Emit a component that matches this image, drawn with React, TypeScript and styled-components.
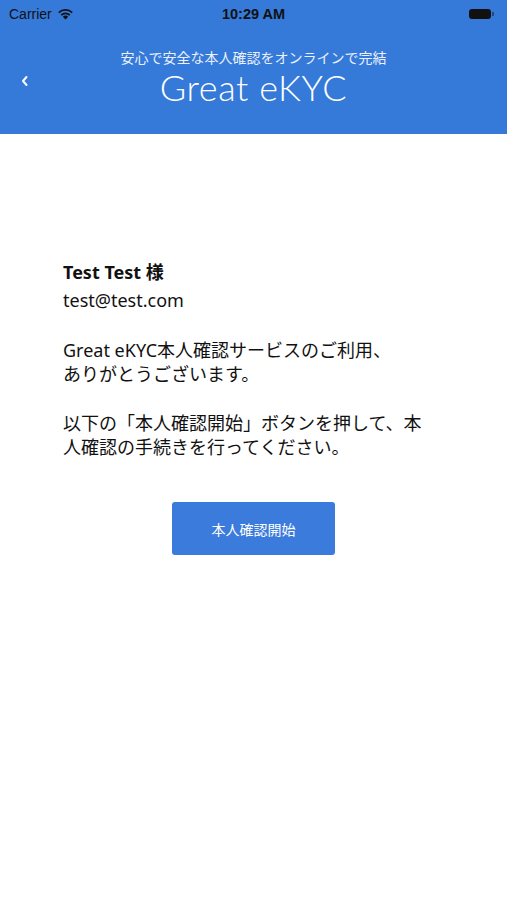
import styled, { createGlobalStyle } from "styled-components";

const GlobalStyle = createGlobalStyle`
  html, body {
    margin: 0;
    padding: 0;
    background: #ffffff;
  }
  body {
    font-family: "Noto Sans", "Noto Sans CJK JP", sans-serif;
  }
`;

const Screen = styled.div`
  width: 507px;
  height: 900px;
  background: #ffffff;
  display: flex;
  flex-direction: column;
`;

const Header = styled.header`
  background: #3579d9;
  height: 134px;
  color: #ffffff;
  display: flex;
  flex-direction: column;
`;

const StatusBar = styled.div`
  height: 28px;
  display: grid;
  grid-template-columns: 1fr auto 1fr;
  align-items: center;
  padding: 0 9px;
  font-family: "Liberation Sans", "Noto Sans", sans-serif;
  font-size: 14px;
  color: #111;
`;

const Carrier = styled.div`
  display: flex;
  align-items: center;
  gap: 5px;
  font-weight: 400;
`;

const Clock = styled.div`
  font-weight: 700;
  font-size: 14.5px;
`;

const Battery = styled.div`
  justify-self: end;
  display: flex;
  align-items: center;
  gap: 1px;
  margin-right: 4px;
`;

const BatteryBody = styled.div`
  width: 22px;
  height: 10px;
  border-radius: 3px;
  background: #111;
`;

const BatteryTip = styled.div`
  width: 2px;
  height: 4px;
  border-radius: 0 1px 1px 0;
  background: #111;
  opacity: 0.5;
`;

const NavBar = styled.div`
  flex: 1;
  display: grid;
  grid-template-columns: 50px 1fr 50px;
  align-items: center;
`;

const Back = styled.div`
  display: flex;
  justify-content: center;
  margin-top: 0;
`;

const Titles = styled.div`
  display: flex;
  flex-direction: column;
  align-items: center;
  margin-top: -8px;
`;

const Subtitle = styled.div`
  font-family: "Noto Sans CJK JP", sans-serif;
  font-size: 14px;
  line-height: 19px;
  color: #eaf1fc;
`;

const Title = styled.div`
  font-family: "Lato", "Noto Sans", sans-serif;
  font-weight: 300;
  font-size: 36px;
  line-height: 40px;
  letter-spacing: 0.6px;
`;

const Content = styled.main`
  padding: 124px 63px 0;
  display: flex;
  flex-direction: column;
  font-family: "Noto Sans", "Noto Sans CJK JP", sans-serif;
  color: #111;
`;

const Name = styled.div`
  font-size: 18px;
  font-weight: 700;
  line-height: 28px;
`;

const Email = styled.div`
  font-size: 18px;
  line-height: 28px;
`;

const Para = styled.p<{ $gap: number }>`
  margin: ${(p) => p.$gap}px 0 0;
  font-size: 18px;
  line-height: 24px;
`;

const ButtonRow = styled.div`
  display: flex;
  justify-content: center;
  margin-top: 43px;
`;

const Button = styled.button`
  width: 163px;
  height: 53px;
  border: none;
  border-radius: 3px;
  background: #3a7bdc;
  color: #ffffff;
  font-family: "Noto Sans CJK JP", sans-serif;
  font-size: 14px;
`;

export default function App() {
  return (
    <Screen>
      <GlobalStyle />
      <Header>
        <StatusBar>
          <Carrier>
            Carrier
            <svg width="17" height="12" viewBox="0 0 17 12">
              <path d="M8.5 11.5 L5.8 8.7 A3.9 3.9 0 0 1 11.2 8.7 Z" fill="#111" />
              <path d="M3.6 6.5 A7 7 0 0 1 13.4 6.5 L12.2 7.7 A5.3 5.3 0 0 0 4.8 7.7 Z" fill="#111" />
              <path d="M1.2 4.1 A10.4 10.4 0 0 1 15.8 4.1 L14.6 5.3 A8.7 8.7 0 0 0 2.4 5.3 Z" fill="#111" />
            </svg>
          </Carrier>
          <Clock>10:29 AM</Clock>
          <Battery>
            <BatteryBody />
            <BatteryTip />
          </Battery>
        </StatusBar>
        <NavBar>
          <Back>
            <svg width="10" height="12" viewBox="0 0 10 12">
              <path d="M6.5 2 L3 6 L6.5 10" stroke="#fff" strokeWidth="2" fill="none" strokeLinecap="round" strokeLinejoin="round" />
            </svg>
          </Back>
          <Titles>
            <Subtitle>安心で安全な本人確認をオンラインで完結</Subtitle>
            <Title>Great eKYC</Title>
          </Titles>
          <div />
        </NavBar>
      </Header>
      <Content>
        <Name>Test Test 様</Name>
        <Email>test@test.com</Email>
        <Para $gap={24}>
          Great eKYC本人確認サービスのご利用、
          <br />
          ありがとうございます。
        </Para>
        <Para $gap={25}>
          以下の「本人確認開始」ボタンを押して、本
          <br />
          人確認の手続きを行ってください。
        </Para>
        <ButtonRow>
          <Button>本人確認開始</Button>
        </ButtonRow>
      </Content>
    </Screen>
  );
}
